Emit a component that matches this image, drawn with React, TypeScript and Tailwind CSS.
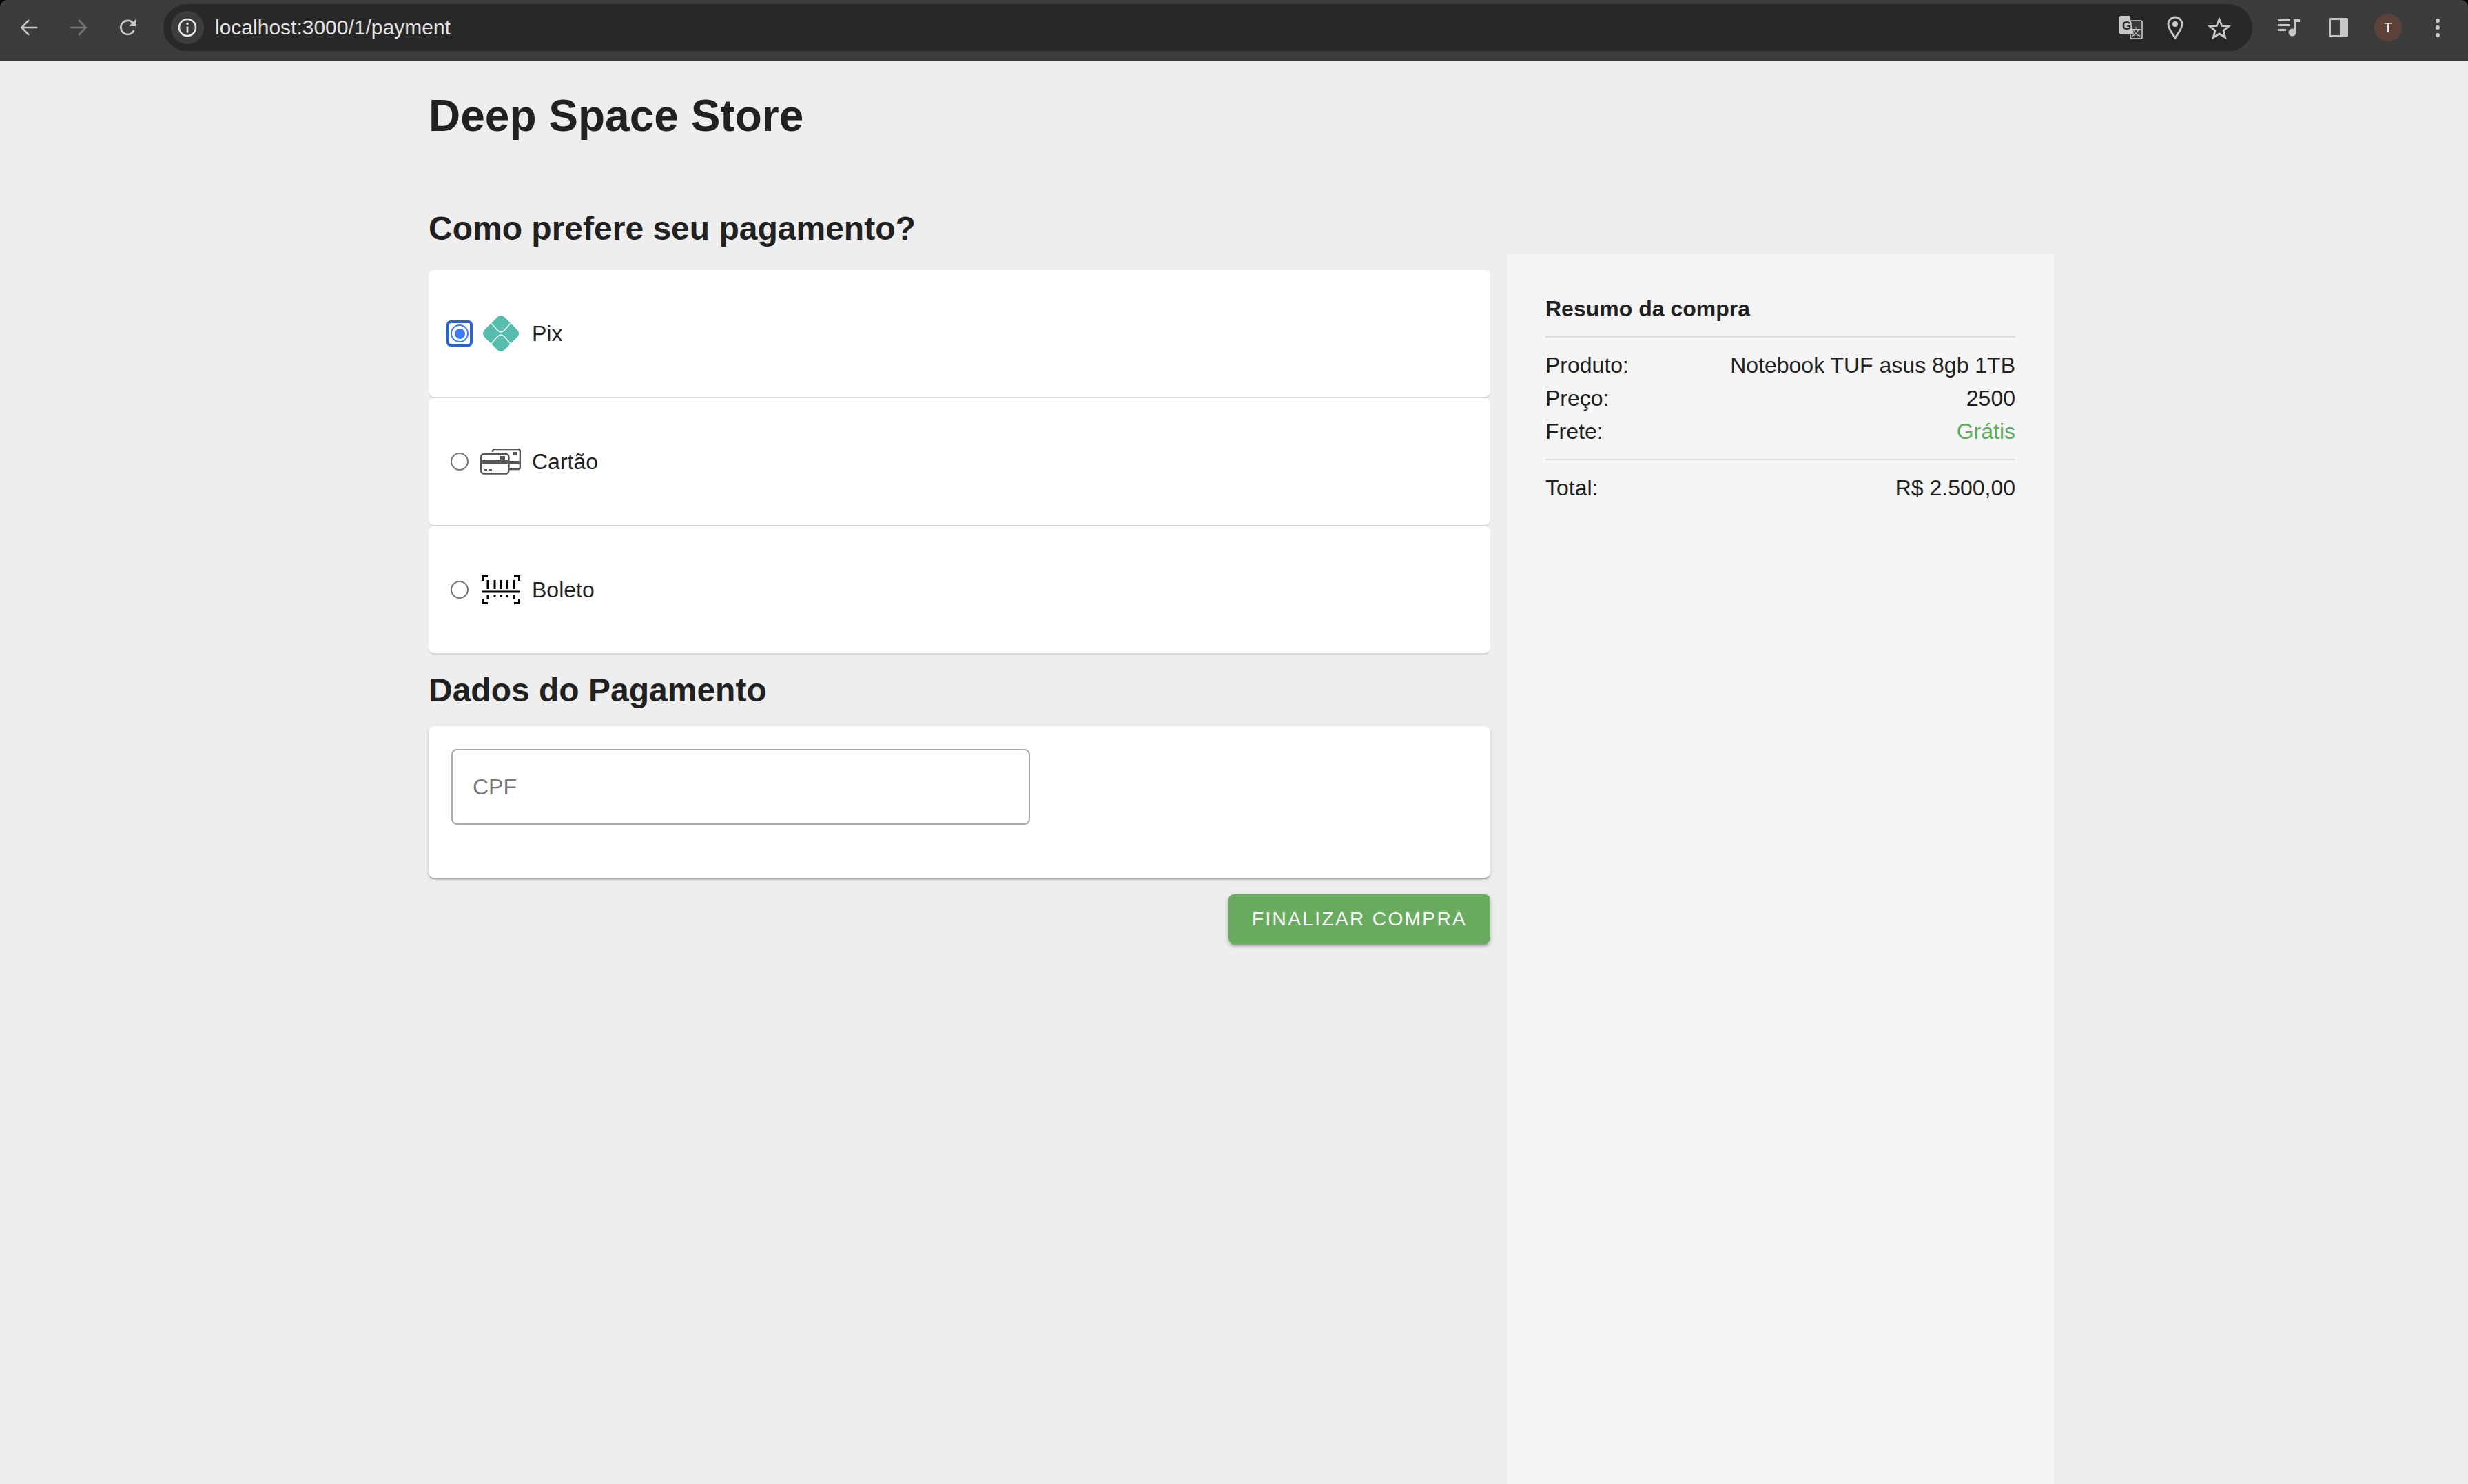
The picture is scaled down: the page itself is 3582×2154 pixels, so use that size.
const FONT = "font-['Liberation_Sans',Arial,sans-serif]";

function ToolbarButton({ children }: { children: React.ReactNode }) {
  return <div className="flex h-[68px] w-[72px] shrink-0 items-center justify-center">{children}</div>;
}

function BackIcon({ dim = false, flip = false }: { dim?: boolean; flip?: boolean }) {
  return (
    <svg width="26" height="26" viewBox="0 0 26 26" fill="none" stroke={dim ? '#777777' : '#c7c7c7'} strokeWidth="2.6" className={flip ? 'rotate-180' : ''}>
      <path d="M25 13H3M13 2 2.5 13 13 24" />
    </svg>
  );
}

function ReloadIcon() {
  return (
    <svg width="28" height="28" viewBox="0 0 28 28" fill="none">
      <path d="M22.5 18a10 10 0 1 1-1-10" stroke="#c7c7c7" strokeWidth="2.8" />
      <path d="M25 2v10H15z" fill="#c7c7c7" />
    </svg>
  );
}

function InfoIcon() {
  return (
    <svg width="28" height="28" viewBox="0 0 28 28" fill="none">
      <circle cx="14" cy="14" r="12" stroke="#e3e3e3" strokeWidth="2.6" />
      <circle cx="14" cy="8.5" r="1.8" fill="#e3e3e3" />
      <path d="M14 12.5v9" stroke="#e3e3e3" strokeWidth="2.8" />
    </svg>
  );
}

function TranslateIcon() {
  return (
    <svg width="34" height="34" viewBox="0 0 34 34">
      <rect x="16" y="7" width="17" height="26" rx="2" fill="#3a3a3a" stroke="#c7c7c7" strokeWidth="1.6" />
      <path d="M2 0h13l6 27H2a2 2 0 0 1-2-2V2a2 2 0 0 1 2-2z" fill="#c7c7c7" />
      <text x="4" y="20" fontSize="17" fontWeight="700" fill="#282828" fontFamily="Liberation Sans">G</text>
      <text x="17" y="28" fontSize="14" fill="#c7c7c7" fontFamily="Noto Sans CJK SC">文</text>
    </svg>
  );
}

function PinIcon() {
  return (
    <svg width="24" height="34" viewBox="0 0 24 34" fill="none">
      <path d="M12 32C7 24 2 19 2 12a10 10 0 0 1 20 0c0 7-5 12-10 20z" stroke="#c7c7c7" strokeWidth="2.8" />
      <circle cx="12" cy="12" r="4" fill="#c7c7c7" />
    </svg>
  );
}

function StarIcon() {
  return (
    <svg width="34" height="33" viewBox="0 0 34 33" fill="none">
      <path d="m17 4 3.8 9.4 10 .7-7.7 6.4 2.5 9.8L17 25l-8.6 5.3 2.5-9.8-7.7-6.4 10-.7z" stroke="#c7c7c7" strokeWidth="2.8" />
    </svg>
  );
}

function MediaIcon() {
  return (
    <svg width="32" height="26" viewBox="0 0 32 26" fill="#c7c7c7">
      <rect x="0" y="1" width="18" height="3" />
      <rect x="0" y="8" width="18" height="3" />
      <rect x="0" y="15" width="12" height="3" />
      <path d="M23 1h9v4h-5.500v15H23z" />
      <circle cx="21" cy="20" r="5.500" />
    </svg>
  );
}

function SidePanelIcon() {
  return (
    <svg width="28" height="28" viewBox="0 0 28 28">
      <rect x="0" y="0" width="28" height="28" rx="2" fill="#c7c7c7" />
      <rect x="3" y="3" width="13" height="22" fill="#3c3c3c" />
    </svg>
  );
}

function PixIcon() {
  return (
    <svg width="54" height="54" viewBox="0 0 54 54">
      <rect x="6.500" y="6.500" width="41" height="41" rx="7" fill="#56bcac" transform="rotate(45 27 27)" />
      <path d="M9 9C17 14 21 25 27 25S37 14 45 9M9 45C17 40 21 29 27 29S37 40 45 45" fill="none" stroke="#ffffff" strokeWidth="1.4" />
    </svg>
  );
}

function CardsIcon() {
  return (
    <svg width="59" height="38" viewBox="0 0 59 38" fill="none" stroke="#555555" strokeWidth="2.6">
      <path d="M18 5V4a3 3 0 0 1 3-3h34a3 3 0 0 1 3 3v23a3 3 0 0 1-3 3h-13" />
      <rect x="1.300" y="8" width="40" height="28.500" rx="4" fill="#ffffff" />
      <rect x="2" y="17" width="38" height="5" fill="#555555" stroke="none" />
      <rect x="29" y="11" width="7" height="5" fill="#555555" stroke="none" />
      <rect x="6" y="30" width="4" height="2" fill="#555555" stroke="none" />
      <rect x="13" y="30" width="4" height="2" fill="#555555" stroke="none" />
      <rect x="42" y="18" width="15" height="5" fill="#555555" stroke="none" />
      <rect x="47" y="5" width="7" height="5" fill="#555555" stroke="none" />
    </svg>
  );
}

function BarcodeIcon() {
  return (
    <svg width="56" height="42" viewBox="0 0 56 42" fill="none" stroke="#000000">
      <path d="M1.500 8V1.500H9M47 1.500h7.500V8M1.500 34v6.500H9M47 40.500h7.500V34" strokeWidth="3" />
      <path d="M9 7v13M19 7v13M28 7v13M37 7v13M47 7v13" strokeWidth="3" />
      <path d="M0 24h56" strokeWidth="3" />
      <path d="M9 29v5M19 29v3M28 29v3M37 29v3M47 29v5" strokeWidth="3" />
    </svg>
  );
}

function BrowserBar() {
  return (
    <div className="flex h-[88px] shrink-0 items-center rounded-t-[10px] border-b border-[#363636] bg-[#3c3c3c] pb-[7px] pl-[6px] pr-2">
      <ToolbarButton><BackIcon /></ToolbarButton>
      <ToolbarButton><BackIcon dim flip /></ToolbarButton>
      <ToolbarButton><ReloadIcon /></ToolbarButton>
      <div className="ml-[15px] flex h-[68px] flex-1 items-center rounded-full bg-[#282828] pl-[11px] pr-4">
        <div className="flex h-12 w-12 items-center justify-center rounded-full bg-[#3c3c3c]"><InfoIcon /></div>
        <span className="ml-4 flex-1 text-[30px] leading-none text-[#e3e3e3]">localhost:3000/1/payment</span>
        <div className="flex items-center">
          <div className="flex w-16 justify-center"><TranslateIcon /></div>
          <div className="flex w-16 justify-center"><PinIcon /></div>
          <div className="flex w-16 justify-center"><StarIcon /></div>
        </div>
      </div>
      <div className="ml-[17px] flex items-center">
        <ToolbarButton><MediaIcon /></ToolbarButton>
        <ToolbarButton><SidePanelIcon /></ToolbarButton>
        <ToolbarButton>
          <div className="flex h-10 w-10 items-center justify-center rounded-full bg-[#5c4238] text-[20px] text-white">T</div>
        </ToolbarButton>
        <ToolbarButton>
          <div className="flex flex-col gap-[4.500px]">
            <span className="h-[6px] w-[6px] rounded-full bg-[#c7c7c7]" />
            <span className="h-[6px] w-[6px] rounded-full bg-[#c7c7c7]" />
            <span className="h-[6px] w-[6px] rounded-full bg-[#c7c7c7]" />
          </div>
        </ToolbarButton>
      </div>
    </div>
  );
}

function PaymentOption({ label, selected, icon }: { label: string; selected?: boolean; icon: React.ReactNode }) {
  return (
    <div className="flex h-[184px] items-center rounded-lg bg-white pl-[26px] shadow-[0_2px_0_0_#d8d8d8]">
      {selected ? (
        <div className="flex h-[38px] w-[38px] items-center justify-center rounded-md border-4 border-[#2a63cc]">
          <div className="flex h-[26px] w-[26px] items-center justify-center rounded-full border-2 border-[#3b7bfa] bg-white">
            <div className="h-[15px] w-[15px] rounded-full bg-[#3b7bfa]" />
          </div>
        </div>
      ) : (
        <div className="mx-[6px] h-[26px] w-[26px] rounded-full border-2 border-[#767676] bg-white" />
      )}
      <div className="ml-[11px] flex w-[59px] justify-center">{icon}</div>
      <span className="ml-4 text-[32px] text-[#212121]">{label}</span>
    </div>
  );
}

function SummaryRow({ label, value, green }: { label: string; value: string; green?: boolean }) {
  return (
    <div className="flex h-12 items-center justify-between text-[32px] text-[#212121]">
      <span>{label}</span>
      <span className={green ? 'text-[#5cab5e]' : ''}>{value}</span>
    </div>
  );
}

export default function App() {
  return (
    <div className={`flex min-h-screen flex-col overflow-hidden bg-black ${FONT}`}>
      <BrowserBar />
      <div className="flex flex-1 bg-[#eeeeee] pl-[622px]">
        {/* Left column */}
        <main className="w-[1541px] shrink-0 pt-10">
          <h1 className="text-[64px] font-bold leading-[80px] text-[#212121]">Deep Space Store</h1>
          <h2 className="mt-[96px] text-[48px] font-bold leading-[56px] text-[#212121]">Como prefere seu pagamento?</h2>

          <div className="mt-[32px] flex flex-col gap-[2px]">
            <PaymentOption label="Pix" selected icon={<PixIcon />} />
            <PaymentOption label="Cartão" icon={<CardsIcon />} />
            <PaymentOption label="Boleto" icon={<BarcodeIcon />} />
          </div>

          <h2 className="mt-[26px] text-[48px] font-bold leading-[56px] text-[#212121]">Dados do Pagamento</h2>
          <div className="mt-[24px] h-[220px] rounded-lg bg-white pl-[33px] pt-[33px] shadow-[0_4px_2px_-2px_rgba(0,0,0,0.2),0_2px_2px_0_rgba(0,0,0,0.14),0_2px_6px_0_rgba(0,0,0,0.12)]">
            <div className="flex h-[110px] w-[840px] items-center rounded-lg border-2 border-[#aaaaaa] pl-[29px] text-[32px] text-[#777777]">CPF</div>
          </div>

          <div className="mt-6 flex justify-end">
            <button className="flex h-[72px] w-[380px] items-center justify-center rounded-lg bg-[#69ac5f] text-[28px] tracking-[2.400px] text-white shadow-[0_6px_2px_-4px_rgba(0,0,0,0.2),0_4px_4px_0_rgba(0,0,0,0.14),0_2px_10px_0_rgba(0,0,0,0.12)]">
              FINALIZAR COMPRA
            </button>
          </div>
        </main>

        {/* Summary */}
        <aside className="ml-6 mt-[280px] w-[794px] shrink-0 bg-[#f5f5f5] px-14 pt-[56px]">
          <h3 className="text-[32px] font-bold leading-12 text-[#212121]">Resumo da compra</h3>
          <div className="mt-[16px] h-[2px] bg-[#dddddd]" />
          <div className="mt-4">
            <SummaryRow label="Produto:" value="Notebook TUF asus 8gb 1TB" />
            <SummaryRow label="Preço:" value="2500" />
            <SummaryRow label="Frete:" value="Grátis" green />
          </div>
          <div className="mt-4 h-[2px] bg-[#dddddd]" />
          <div className="mt-4">
            <SummaryRow label="Total:" value="R$ 2.500,00" />
          </div>
        </aside>
      </div>
    </div>
  );
}
